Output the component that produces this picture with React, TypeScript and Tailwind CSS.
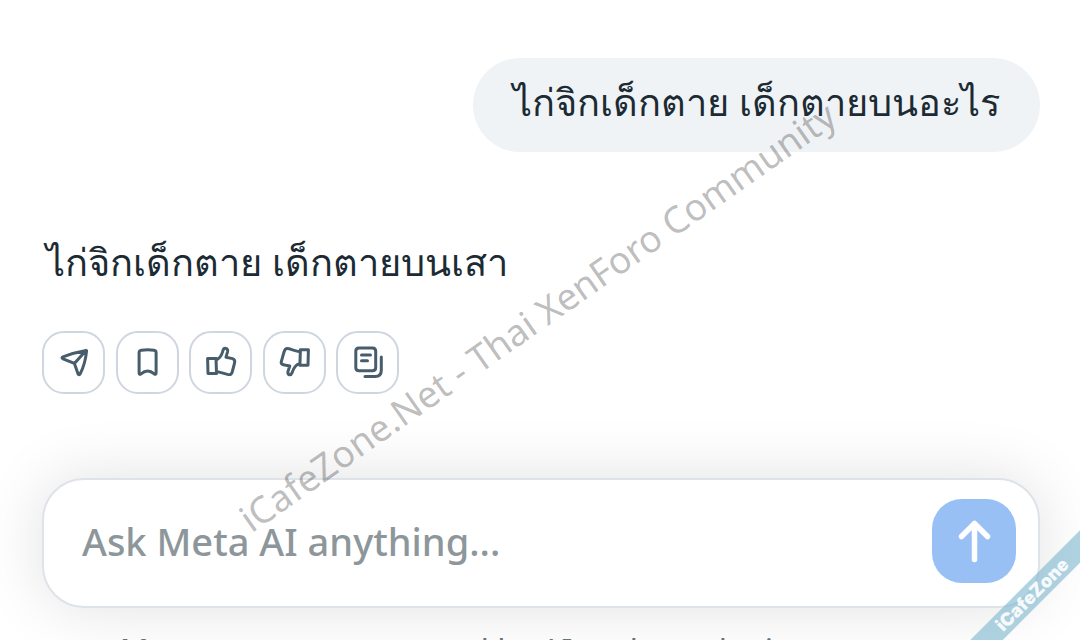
import { useState } from 'react'
import type { ReactNode } from 'react'

const actions: { label: string; icon: ReactNode }[] = [
    {
        label: 'Share',
        icon: <path d="M12 -12.6C5 -11.4 -4 -8.9 -11 -6.2C-12.4 -5.6 -12.4 -4.8 -11 -4.2L0.4 0.4L4 10.8C4.5 12 5.6 12 6.2 10.8C9.5 4.2 11.8 -4.4 12.6 -12.2ZM0.4 0.4L12 -12.6" />
    },
    {
        label: 'Save',
        icon: <path d="M-7.9 9.8V-10.4Q-7.9 -12.4 -5.7 -12.8Q0.8 -13.6 7 -12.8Q9.1 -12.4 9.1 -10.4V9.8Q9.1 12 7.2 10.9Q4 8 0.6 8Q-2.6 8 -6 10.9Q-7.9 12 -7.9 9.8Z" />
    },
    {
        label: 'Like',
        icon: <path d="M-13.4 -4.6H-5L-4.5 10.5H-13ZM-5 -3C-1 -4.5 1 -8.5 2 -12.5C3 -16 7.2 -15 6.6 -11.4L5 -5.8L11.6 -4.4C14.2 -3.6 14 -1.4 13.4 0.6L11.2 9C10.4 11.8 9 12 6.5 11.4L-4.5 8.4" />
    },
    {
        label: 'Dislike',
        icon: <path d="M14.4 -13.2H6.4L5.9 2.2H14ZM6.2 -11.2C0.5 -11.8 -4 -14.6 -7.2 -14.4C-9.4 -14.2 -9.7 -11.6 -10.4 -9.6L-12.7 -1.4C-13.4 1.2 -11.5 1.8 -4.2 3L-6 8.4C-6.8 12.2 -3.3 13 -2 9.9C-0.6 5.4 1.8 1.4 5.9 0.4" />
    },
    {
        label: 'Copy',
        icon: <path d="M-9 -15H4.5Q7.7 -15 7.7 -11.8V4.5Q7.7 7.7 4.5 7.7H-9Q-12.2 7.7 -12.2 4.5V-11.8Q-12.2 -15 -9 -15ZM-6.5 -8H2.5M-6.5 -2.2H-0.5M13.3 -6V7.3Q13.3 13.5 7.3 13.5H-3" />
    }
];

function App() {
    const [message, setMessage] = useState('');

    return (
        <div className="relative flex h-screen flex-col overflow-hidden bg-white pl-[42px] pr-10 font-['Noto_Sans','Open_Sans',sans-serif] text-[#1c2b33]">
            <main className="flex flex-col pt-[58px]">
                <p className="self-end rounded-full bg-[#f0f3f6] px-10 pt-[15px] pb-[23px] text-[38px] leading-14">
                    ไก่จิกเด็กตาย เด็กตายบนอะไร
                </p>
                <p className="mt-[81px] pl-1 text-[38px] leading-14">
                    ไก่จิกเด็กตาย เด็กตายบนเสา
                </p>
                <div className="mt-[42px] flex w-[357px] justify-between">
                    {actions.map((action) => (
                        <button
                            key={action.label}
                            aria-label={action.label}
                            className="flex size-[63px] items-center justify-center rounded-[22px] border-2 border-[#cfd6df] bg-white hover:bg-gray-50"
                        >
                            <svg
                                viewBox="-18 -18 36 36"
                                className="size-9 fill-none stroke-[#475d6c] stroke-3"
                                strokeLinecap="round"
                                strokeLinejoin="round"
                            >
                                {action.icon}
                            </svg>
                        </button>
                    ))}
                </div>
            </main>

            <form
                onSubmit={(e) => e.preventDefault()}
                className="mt-[84px] flex shrink-0 items-center rounded-[42px] border-2 border-[#dee3e9] bg-white pt-[19px] pb-[23px] pl-[38px] pr-[22px] shadow-[0_0_64px_rgba(0,0,0,0.12)]"
            >
                <input
                    aria-label="Ask Meta AI anything"
                    placeholder="Ask Meta AI anything..."
                    value={message}
                    onChange={(e) => setMessage(e.target.value)}
                    className="min-w-0 flex-1 text-[38px] font-medium outline-none placeholder:text-[#8d979b]"
                />
                <button
                    type="submit"
                    aria-label="Send"
                    className="flex size-[84px] items-center justify-center rounded-[30px] bg-[#99c0f4]"
                >
                    <svg
                        viewBox="0 0 84 84"
                        className="size-full fill-none stroke-white stroke-[5.5px]"
                        strokeLinecap="round"
                        strokeLinejoin="round"
                    >
                        <path d="M42.5 60.5V24.5M29.5 37.5L42.5 24.5L55.5 37.5" />
                    </svg>
                </button>
            </form>

            <p className="mt-[23px] shrink-0 text-center text-[32px] leading-10 text-[#65747c]">
                Messages are generated by AI and may be inaccurate or inappropriate.
            </p>

            {/* site watermark */}
            <span className="pointer-events-none absolute left-[537px] top-[316px] -translate-x-1/2 -translate-y-1/2 -rotate-35 whitespace-nowrap text-[37px] leading-none text-black/27">
                iCafeZone.Net - Thai XenForo Community
            </span>
            <div className="pointer-events-none absolute -right-[52px] bottom-[34px] flex h-[23px] w-[200px] -rotate-45 items-center justify-center bg-[#70aecb]/55 font-['Inter',sans-serif] text-lg font-black text-white/90">
                iCafeZone
            </div>
        </div>
    )
}

export default App
